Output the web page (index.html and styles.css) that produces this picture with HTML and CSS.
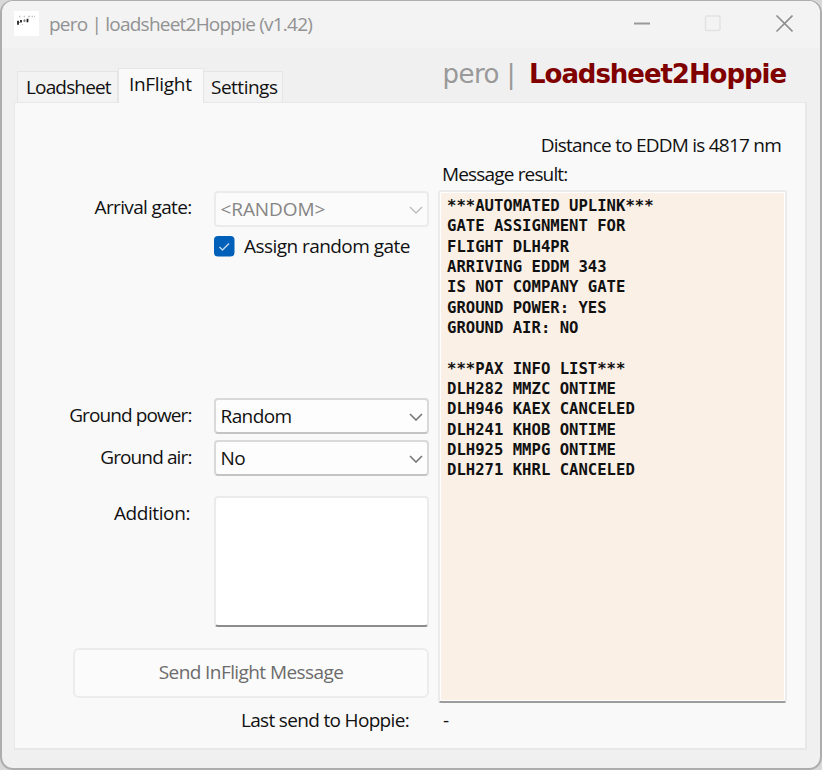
FILE: index.html
```
<!DOCTYPE html>
<html lang="en">
<head>
<meta charset="utf-8">
<title>pero | loadsheet2Hoppie (v1.42)</title>
<link rel="stylesheet" href="styles.css">
</head>
<body>
<div class="window">
  <header class="titlebar">
    <svg class="app-icon" width="25" height="25" viewBox="0 0 25 25"><rect width="25" height="25" fill="#fff"/><path d="M5 5.500h1.500M9.500 5.500h1.500M14 5.500h2M17.500 5.500h1.500M20 5.500h1" stroke="#c4c4c4" stroke-width="1.300"/><path d="M4 9.800v4M7 9v2.500M13.500 7.800v3.400" stroke="#222" stroke-width="1.800"/><path d="M10.500 8.500v2.300" stroke="#555" stroke-width="1.300"/><path d="M5 11.500h1.500M9 9.800h3.500" stroke="#999"/><circle cx="8.500" cy="13.500" r=".6" fill="#bbb"/></svg>
    <span class="window-title">pero | loadsheet2Hoppie (v1.42)</span>
    <div class="window-controls">
      <svg width="18" height="18" viewBox="0 0 18 18"><path d="M1 8.500h16" stroke="#999" stroke-width="1.800"/></svg>
      <svg width="18" height="18" viewBox="0 0 18 18"><rect x="1.500" y="1" width="14.500" height="14.500" rx="1.500" fill="none" stroke="#e2e2e2" stroke-width="1.500"/></svg>
      <svg width="18" height="18" viewBox="0 0 18 18"><path d="M1.500 .5l16 16M17.500 .5l-16 16" stroke="#8e8e8e" stroke-width="1.600"/></svg>
    </div>
  </header>
  <div class="top">
    <nav class="tabs">
      <div class="tab tab-load"><span>Loadsheet</span></div>
      <div class="tab active"><span>InFlight</span></div>
      <div class="tab tab-set"><span>Settings</span></div>
    </nav>
    <div class="brand"><span class="author">pero |</span><span class="product">Loadsheet2Hoppie</span></div>
  </div>
  <main class="panel">
    <section class="form">
      <div class="row">
        <label class="lbl-gate">Arrival gate:</label>
        <div class="select disabled"><span class="v-gate">&lt;RANDOM&gt;</span><svg width="14" height="8" viewBox="0 0 14 8"><path d="M1 1l6 6 6-6" fill="none" stroke="#c0c0c0" stroke-width="1.500"/></svg></div>
      </div>
      <div class="check">
        <svg width="21" height="21" viewBox="0 0 21 21"><rect width="20.500" height="20.500" rx="4" fill="#005fb8"/><path d="M5.500 11l3 3 6.500-6.500" fill="none" stroke="#b9d5ed" stroke-width="1.500"/></svg>
        <span>Assign random gate</span>
      </div>
      <div class="row power">
        <label class="lbl-power">Ground power:</label>
        <div class="select"><span>Random</span><svg width="14" height="8" viewBox="0 0 14 8"><path d="M1 1l6 6 6-6" fill="none" stroke="#777" stroke-width="1.600"/></svg></div>
      </div>
      <div class="row air">
        <label class="lbl-air">Ground air:</label>
        <div class="select"><span>No</span><svg width="14" height="8" viewBox="0 0 14 8"><path d="M1 1l6 6 6-6" fill="none" stroke="#777" stroke-width="1.600"/></svg></div>
      </div>
      <div class="row addition">
        <label class="lbl-add">Addition:</label>
        <div class="textarea"></div>
      </div>
      <div class="send"><span>Send InFlight Message</span></div>
      <div class="last"><span>Last send to Hoppie:</span></div>
    </section>
    <section class="result">
      <div class="distance"><span>Distance to EDDM is 4817 nm</span></div>
      <div class="caption"><span>Message result:</span></div>
      <pre class="output">***AUTOMATED UPLINK***
GATE ASSIGNMENT FOR
FLIGHT DLH4PR
ARRIVING EDDM 343
IS NOT COMPANY GATE
GROUND POWER: YES
GROUND AIR: NO

***PAX INFO LIST***
DLH282 MMZC ONTIME
DLH946 KAEX CANCELED
DLH241 KHOB ONTIME
DLH925 MMPG ONTIME
DLH271 KHRL CANCELED</pre>
      <div class="dash">-</div>
    </section>
  </main>
</div>
</body>
</html>
```
FILE: styles.css
```
* { box-sizing: border-box; }
body {
  margin: 0;
  background: #d8d8d8;
  font: 19px/24px "Open Sans", "Noto Sans", sans-serif;
  letter-spacing: -0.5px;
  color: #111;
}
.window {
  width: 822px;
  height: 770px;
  border: 2px solid #adadad;
  border-top-width: 1px;
  border-radius: 13px;
  background: #f0f0f0;
  overflow: hidden;
}
.titlebar {
  height: 47px;
  padding: 0 27px 2px 12px;
  display: flex;
  align-items: center;
  background: #f3f3f3;
  color: #929292;
}
.app-icon { margin-right: 10px; }
.window-title { letter-spacing: -0.78px; }
.window-controls { margin-left: auto; display: flex; gap: 53px; }
.top { height: 54px; display: flex; justify-content: space-between; padding: 0 34px 0 15px; }
.tabs { display: flex; align-items: flex-end; }
.tab {
  height: 31px;
  border: 1px solid #e5e5e5;
  border-bottom: 0;
  background: #f3f3f3;
  padding: 3px 0 0 8px;
  white-space: nowrap;
}
.tab-load { width: 101px; letter-spacing: -0.85px; }
.tab.active {
  width: 86px;
  height: 35px;
  margin-bottom: -1px;
  padding: 3px 0 0 10px;
  background: #f9f9f9;
  position: relative;
  letter-spacing: -0.3px;
}
.tab-set { width: 79px; padding-left: 7px; border-left: 0; }
.brand {
  font: 26px/32px "DejaVu Sans", sans-serif;
  letter-spacing: -0.5px;
  padding-top: 10px;
  white-space: nowrap;
}
.author { color: #999; margin-right: 14px; }
.product { color: #800000; font-weight: bold; letter-spacing: -1.05px; }
.panel {
  width: 793px;
  height: 648px;
  margin-left: 12px;
  border: 2px solid #e8e8e8;
  border-width: 1px 2px 2px 1px;
  background: #f9f9f9;
  display: flex;
  gap: 9px;
}
.form { width: 414px; padding-top: 88px; }
.row { display: flex; }
.row label { width: 199px; padding: 4px 22px 0 0; text-align: right; white-space: nowrap; }
.row .lbl-gate { letter-spacing: -0.65px; }
.row .lbl-power { padding-top: 5px; letter-spacing: -0.9px; }
.row .lbl-air { padding-top: 5px; letter-spacing: -0.88px; }
.row .lbl-add { padding: 5px 24px 0 0; letter-spacing: -0.4px; }
.select {
  width: 216px;
  height: 36px;
  border: 2px solid #d9d9d9;
  border-bottom-color: #c4c4c4;
  border-radius: 4px;
  background: #fdfdfd;
  display: flex;
  align-items: center;
  justify-content: space-between;
  padding: 0 4px 0 5px;
}
.select span { letter-spacing: -0.6px; }
.select .v-gate { letter-spacing: -0.1px; }
.select svg { margin-top: 1px; }
.disabled { border-color: #ebebeb; background: #fbfbfb; color: #858585; }
.check {
  display: flex;
  align-items: center;
  gap: 9px;
  margin: 7px 0 0 199px;
  height: 24px;
  letter-spacing: -0.55px;
}
.power { margin-top: 140px; }
.air { margin-top: 6px; }
.addition { margin-top: 20px; }
.textarea {
  width: 215px;
  height: 131px;
  border: 2px solid #ebebeb;
  border-bottom-color: #8c8c8c;
  border-radius: 4px;
  background: #fff;
}
.send {
  margin: 21px 0 0 58px;
  width: 356px;
  height: 50px;
  border: 2px solid #ececec;
  border-radius: 6px;
  background: #fbfbfb;
  color: #6b6b6b;
  text-align: center;
  line-height: 45px;
  letter-spacing: -0.58px;
}
.last { margin-top: 10px; padding-right: 20px; text-align: right; letter-spacing: -0.67px; }
.result { width: 349px; padding-top: 30px; }
.distance { text-align: right; padding-right: 6px; letter-spacing: -0.77px; }
.caption { margin: 5px 0 0 4px; letter-spacing: -0.84px; }
.output {
  margin: 4px 0 0;
  height: 513px;
  border: 2px solid #ebebeb;
  border-bottom-color: #9c9c9c;
  border-radius: 3px;
  background: #faf0e6;
  box-shadow: inset 0 0 0 1px #fff;
  padding: 4px 6px 3px 7px;
  font: bold 15.600px/20.350px "DejaVu Sans Mono", monospace;
  letter-spacing: 0;
}
.dash { margin: 5px 0 0 5px; }
```
